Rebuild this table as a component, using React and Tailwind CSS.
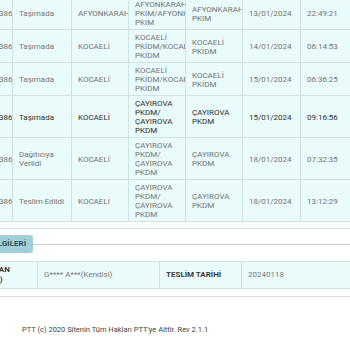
const rows = [
  {
    no: "2750123412386606",
    status: ["Taşımada"],
    city: "AFYONKARAHİSAR",
    from: ["AFYONKARAHİ", "PKIM/AFYONKARAHİSAR", "PKIM"],
    to: ["AFYONKARAHİ", "PKIM"],
    date: "13/01/2024",
    time: "22:49:21",
  },
  {
    no: "2750123412386606",
    status: ["Taşımada"],
    city: "KOCAELİ",
    from: ["KOCAELİ", "PKİDM/KOCAELİ", "PKİDM"],
    to: ["KOCAELİ", "PKİDM"],
    date: "14/01/2024",
    time: "06:14:53",
  },
  {
    no: "2750123412386606",
    status: ["Taşımada"],
    city: "KOCAELİ",
    from: ["KOCAELİ", "PKİDM/KOCAELİ", "PKİDM"],
    to: ["KOCAELİ", "PKİDM"],
    date: "15/01/2024",
    time: "06:36:25",
  },
  {
    no: "2750123412386606",
    status: ["Taşımada"],
    city: "KOCAELİ",
    from: ["ÇAYIROVA", "PKDM/", "ÇAYIROVA", "PKDM"],
    to: ["ÇAYIROVA", "PKDM"],
    date: "15/01/2024",
    time: "09:16:56",
    active: true,
  },
  {
    no: "2750123412386606",
    status: ["Dağıtıcıya", "Verildi"],
    city: "KOCAELİ",
    from: ["ÇAYIROVA", "PKDM/", "ÇAYIROVA", "PKDM"],
    to: ["ÇAYIROVA", "PKDM"],
    date: "18/01/2024",
    time: "07:32:35",
  },
  {
    no: "2750123412386606",
    status: ["Teslim Edildi"],
    city: "KOCAELİ",
    from: ["ÇAYIROVA", "PKDM/", "ÇAYIROVA", "PKDM"],
    to: ["ÇAYIROVA", "PKDM"],
    date: "18/01/2024",
    time: "13:12:29",
  },
];

function Cell({ children, last }) {
  return (
    <div
      className={`flex items-center overflow-hidden whitespace-nowrap pl-[6px] pr-[1px] pt-[3px] pb-[2px] border-b border-[#cfe3e3] ${
        last ? "" : "border-r"
      }`}
    >
      <div>{children}</div>
    </div>
  );
}

function Lines({ items }) {
  return items.map((l, i) => <div key={i}>{l}</div>);
}

export default function App() {
  return (
    <div
      className="w-[350px] h-[350px] overflow-hidden bg-white"
      style={{ fontFamily: "Roboto, 'Liberation Sans', sans-serif" }}
    >
      <div className="-ml-[52px] w-[420px]">
        {/* HAREKETLER */}
        <div className="-mt-[3px] pb-[6px] border-b border-[#d6e6e8]">
          <div className="bg-[#e9fbfb] text-[8px] leading-[9px]">
            {rows.map((r, i) => (
              <div
                key={i}
                className={`grid grid-cols-[65px_59px_57px_57px_57px_58px_68px] ${
                  r.active ? "text-[#2e2e2e]" : "text-[#737373]"
                }`}
              >
                <Cell>{r.no}</Cell>
                <Cell>
                  <Lines items={r.status} />
                </Cell>
                <Cell>{r.city}</Cell>
                <Cell>
                  <Lines items={r.from} />
                </Cell>
                <Cell>
                  <Lines items={r.to} />
                </Cell>
                <Cell>{r.date}</Cell>
                <Cell last>{r.time}</Cell>
              </div>
            ))}
          </div>
        </div>

        {/* TESLİM BİLGİLERİ */}
        <div className="pt-[6px] border-b border-[#dedede] pb-[7px]">
          <div className="flex items-center">
            <div className="w-[85px] bg-[#9fcfd8] text-[#2f4f57] font-bold text-[8px] h-[18px] flex items-center justify-end pr-[7px] rounded-r-[3px] whitespace-nowrap overflow-hidden">
              TESLİM BİLGİLERİ
            </div>
            <div className="flex-1 h-px bg-[#cfcfcf]" />
          </div>

          <div className="mt-[8px] grid grid-cols-[90px_122px_82px_126px] bg-[#e9fbfb] border-y border-[#cfe3e3] text-[8px] leading-[10px]">
            <div className="flex items-center pl-[11px] pt-[3px] pb-[3px] border-r border-[#cfe3e3] font-bold text-[#3a3a3a] whitespace-nowrap overflow-hidden">
              <div>
                TESLİM ALAN
                <br />
                (AD SOYAD)
              </div>
            </div>
            <div className="flex items-center pl-[6px] border-r border-[#cfe3e3] text-[#7a7a7a]">
              G**** A***(Kendisi)
            </div>
            <div className="flex items-center pl-[6px] border-r border-[#cfe3e3] font-bold text-[#3a3a3a]">
              TESLİM TARİHİ
            </div>
            <div className="flex items-center pl-[6px] text-[#7a7a7a]">20240118</div>
          </div>
        </div>
      </div>

      <div className="mt-[27px] pl-[22px] text-[7.5px] text-[#444]">
        PTT (c) 2020 Sitenin Tüm Hakları PTT'ye Aittir. Rev 2.1.1
      </div>
    </div>
  );
}
